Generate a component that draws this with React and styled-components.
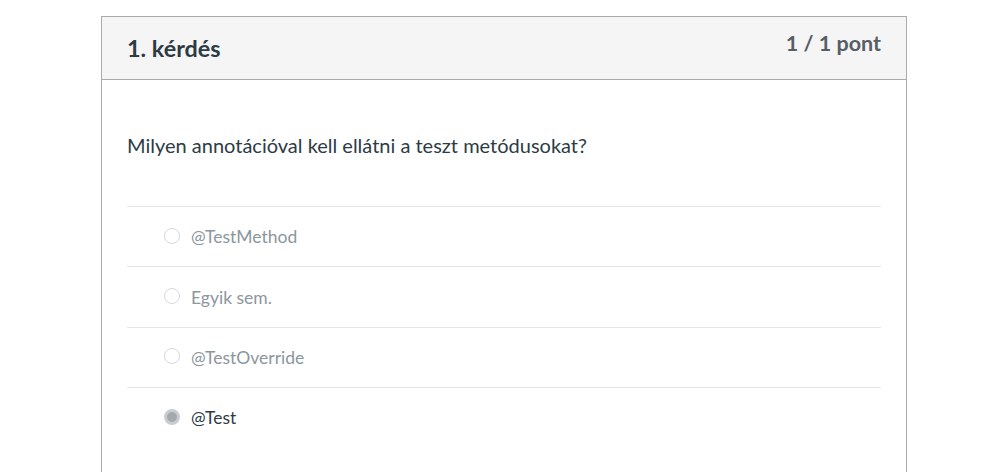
import React from 'react'
import styled, { createGlobalStyle } from 'styled-components'

const GlobalStyle = createGlobalStyle`
  body {
    margin: 0;
    background: #ffffff;
    font-family: Lato, "Open Sans", sans-serif;
  }
`

const Page = styled.div`
  padding: 16px 0 0 101px;
  height: 456px;
  overflow: hidden;
`

const Card = styled.div`
  width: 804px;
  border: 1px solid #aaaaaa;
  border-bottom: none;
  height: 460px;
`

const Header = styled.div`
  display: flex;
  justify-content: space-between;
  align-items: flex-start;
  height: 62px;
  padding: 0 25px;
  background: #f5f5f5;
  border-bottom: 1px solid #aaaaaa;
`

const Title = styled.h2`
  margin: 0;
  padding-top: 17px;
  font-size: 23.4px;
  line-height: 28px;
  font-weight: 700;
  color: #2d3b45;
`

const Points = styled.div`
  padding-top: 13px;
  font-size: 21.5px;
  line-height: 26px;
  font-weight: 700;
  color: #555e65;
`

const Body = styled.div`
  padding: 0 25px;
`

const Question = styled.p`
  margin: 0;
  padding: 53px 0 49px 0;
  font-size: 20px;
  line-height: 24px;
  color: #2d3b45;
`

const Answer = styled.div`
  display: flex;
  align-items: center;
  height: 59.4px;
  border-top: 1px solid #e6e6e6;
  padding-left: 37px;
  font-size: 17.5px;
  color: ${p => (p.$selected ? '#2d3b45' : '#8b969e')};
`

const Radio = styled.span`
  box-sizing: border-box;
  width: 16px;
  height: 16px;
  border-radius: 50%;
  border: ${p => (p.$checked ? '3px solid #c7cdd1' : '1.5px solid #d6dadd')};
  background: ${p => (p.$checked ? '#a5a9ad' : '#ffffff')};
  margin-right: 11px;
  margin-top: -2px;
`

const answers = [
  { text: '@TestMethod' },
  { text: 'Egyik sem.' },
  { text: '@TestOverride' },
  { text: '@Test', selected: true }
]

export default function App() {
  return (
    <Page>
      <GlobalStyle />
      <Card>
        <Header>
          <Title>1. kérdés</Title>
          <Points>1 / 1 pont</Points>
        </Header>
        <Body>
          <Question>Milyen annotációval kell ellátni a teszt metódusokat?</Question>
          {answers.map((a, i) => (
            <Answer key={i} $selected={a.selected}>
              <Radio $checked={a.selected} />
              {a.text}
            </Answer>
          ))}
        </Body>
      </Card>
    </Page>
  )
}
